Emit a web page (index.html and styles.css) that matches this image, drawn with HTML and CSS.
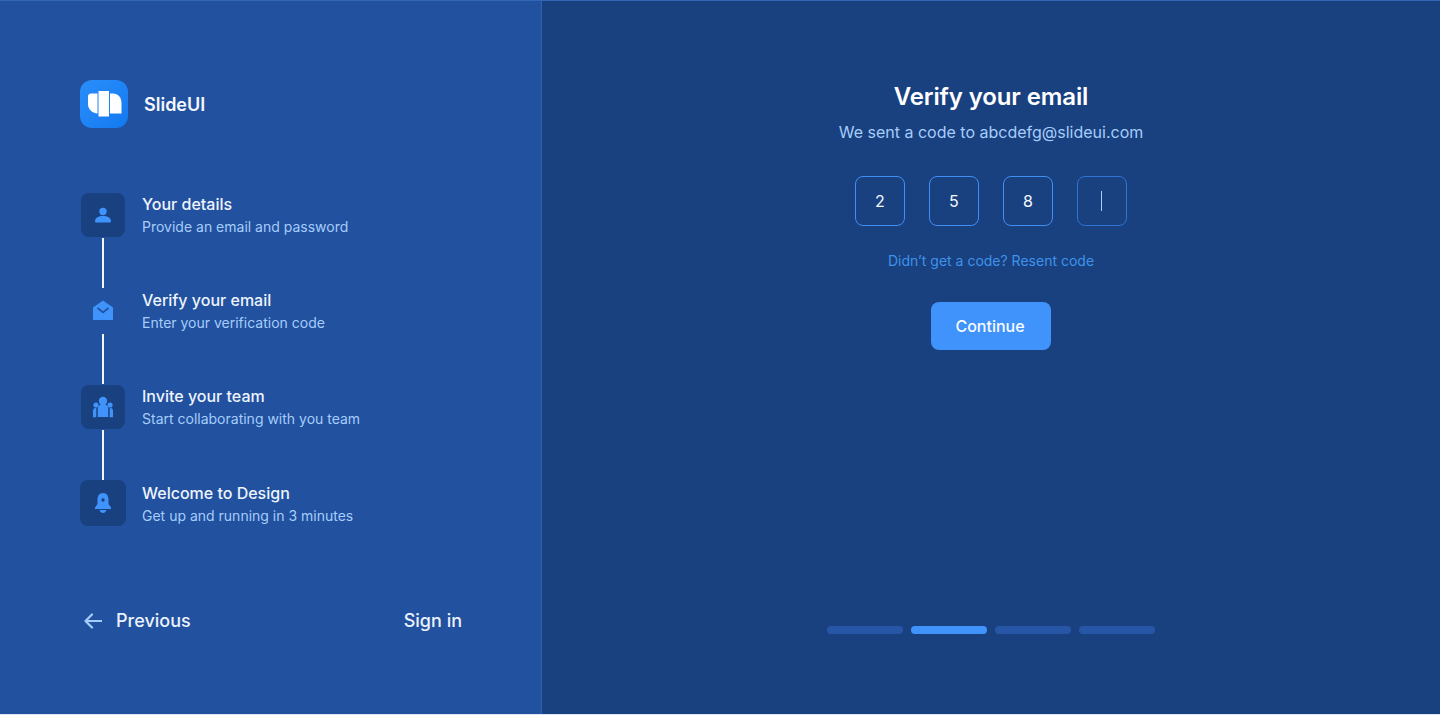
FILE: index.html
```html
<!DOCTYPE html>
<html lang="en">
<head>
<meta charset="utf-8">
<title>SlideUI – Verify your email</title>
<link rel="stylesheet" href="styles.css">
</head>
<body>
<main class="app">
  <aside class="side">
    <div class="brand">
      <div class="logo">
        <svg width="48" height="48" viewBox="0 0 48 48"><path d="M11 13.500h6.500v20c-5.500-.6-9.500-4.200-9.500-9.500v-7.500c0-1.800 1.200-3 3-3z" fill="#fff"/><path d="M18.500 11H29v25.500H18.500z" fill="#fff"/><path d="M30 13.500h3c5 0 8.500 4 8.500 9.500v10.500H30z" fill="#fff"/></svg>
      </div>
      <span class="brand-name">SlideUI</span>
    </div>
    <ol class="steps">
      <li class="step">
        <div class="rail">
          <div class="badge"><svg width="20" height="20" viewBox="0 0 20 20"><circle cx="10" cy="6.500" r="3.700" fill="#3f93fb"/><path d="M2 16.200c0-3.500 3.500-5.200 8-5.200s8 1.700 8 5.200c0 .9-.6 1.300-1.300 1.300H3.300c-.7 0-1.300-.4-1.300-1.300z" fill="#3f93fb"/></svg></div>
          <div class="line"></div>
        </div>
        <div class="copy"><h3>Your details</h3><p>Provide an email and password</p></div>
      </li>
      <li class="step">
        <div class="rail">
          <div class="badge plain"><svg width="22" height="22" viewBox="0 0 22 22"><path d="M1 7.500 11 .5l10 7V20H1z" fill="#3f93fb"/><path d="M5.500 8 11 12.500 16.500 8" fill="none" stroke="#21519f" stroke-width="1.700"/></svg></div>
          <div class="line"></div>
        </div>
        <div class="copy"><h3>Verify your email</h3><p>Enter your verification code</p></div>
      </li>
      <li class="step">
        <div class="rail">
          <div class="badge"><svg width="22" height="22" viewBox="0 0 22 22"><circle cx="11" cy="5" r="4.200" fill="#3f93fb"/><circle cx="4" cy="9" r="2.600" fill="#3f93fb"/><circle cx="18" cy="9" r="2.600" fill="#3f93fb"/><path d="M5.800 13c0-3 2.200-5 5.200-5s5.200 2 5.200 5v8H5.800z" fill="#3f93fb"/><path d="M1 15c0-1.700 1-3 2.500-3h.8v9.200H1zM17.700 12h.8c1.500 0 2.500 1.300 2.500 3v6.200h-3.300z" fill="#3f93fb"/></svg></div>
          <div class="line"></div>
        </div>
        <div class="copy"><h3>Invite your team</h3><p>Start collaborating with you team</p></div>
      </li>
      <li class="step last">
        <div class="rail">
          <div class="badge big"><svg width="20" height="22" viewBox="0 0 20 22"><path d="M10 1c3.500 0 5.500 2.800 5.500 6.500V12l2.500 3.500v1.500H2v-1.500L4.500 12V7.500C4.500 3.800 6.500 1 10 1z" fill="#3f93fb"/><circle cx="10" cy="8" r="1.700" fill="#19407f"/><path d="M6.500 18h7c-.5 1.800-2 3-3.500 3s-3-1.200-3.500-3z" fill="#3f93fb"/></svg></div>
        </div>
        <div class="copy"><h3>Welcome to Design</h3><p>Get up and running in 3 minutes</p></div>
      </li>
    </ol>
    <nav class="side-nav">
      <a class="nav-link" href="#"><svg width="22" height="18" viewBox="0 0 22 18"><path d="M21.500 9H5.500M12 2.500 5.500 9l6.500 6.500" fill="none" stroke="#a3cdfd" stroke-width="2.200" stroke-linecap="round" stroke-linejoin="round"/></svg>Previous</a>
      <a class="nav-link" href="#">Sign in</a>
    </nav>
  </aside>
  <section class="main">
    <div class="panel">
      <h1>Verify your email</h1>
      <p class="sent">We sent a code to abcdefg@slideui.com</p>
      <div class="code">
        <div class="digit">2</div>
        <div class="digit">5</div>
        <div class="digit">8</div>
        <div class="digit active"><span class="caret"></span></div>
      </div>
      <p class="resend">Didn’t get a code? Resent code</p>
      <button class="continue">Continue</button>
    </div>
    <div class="progress">
      <span class="bar"></span><span class="bar on"></span><span class="bar"></span><span class="bar"></span>
    </div>
  </section>
</main>
</body>
</html>
```

FILE: styles.css
```css
* { box-sizing: border-box; }
html, body { margin: 0; height: 100%; }
body { font-family: Inter, "Liberation Sans", sans-serif; background: #19407f; overflow: hidden; }
h1, h3, p, ol { margin: 0; padding: 0; }
ol { list-style: none; }
a { text-decoration: none; color: inherit; }

.app { display: flex; height: 715px; border-top: 1px solid #3267b8; border-bottom: 1px solid #dbe6f5; }

.side { width: 542px; flex: none; background: #21519f; border-right: 1px solid #2f62b1; padding: 79px 79px 0 80px; display: flex; flex-direction: column; }
.brand { display: flex; align-items: center; gap: 16px; height: 48px; }
.logo { width: 48px; height: 48px; border-radius: 12px; background: linear-gradient(135deg, #2a8efb, #1379f0); }
.logo svg { display: block; }
.brand-name { font-size: 18px; font-weight: 600; color: #f4f8fe; }

.steps { margin-top: 65px; }
.step { display: flex; gap: 16px; height: 96px; }
.step.last { height: 46px; margin-top: -1px; }
.step.last .copy { padding-top: 2px; }
.rail { width: 46px; display: flex; flex-direction: column; align-items: center; }
.badge { width: 44px; height: 44px; flex: none; border-radius: 8px; background: #19407f; display: flex; align-items: center; justify-content: center; }
.badge.plain { background: transparent; }
.badge.big { width: 46px; height: 46px; }
.line { width: 2px; height: 50px; margin-top: 1px; background: #f2f6fd; }
.copy h3 { font-size: 16px; line-height: 22px; font-weight: 500; color: #eef4fd; }
.copy p { font-size: 14px; line-height: 24px; color: #a6cdfb; }

.side-nav { margin-top: 83px; display: flex; justify-content: space-between; align-items: center; }
.nav-link { display: flex; align-items: center; gap: 14px; font-size: 18px; line-height: 24px; font-weight: 500; color: #eaf2fd; }
.nav-link svg { display: block; }

.main { flex: 1; display: flex; flex-direction: column; align-items: center; justify-content: space-between; padding: 80px 0 80px; }
.panel { display: flex; flex-direction: column; align-items: center; }
h1 { font-size: 24px; line-height: 32px; font-weight: 600; letter-spacing: -0.12px; color: #fff; }
.sent { margin-top: 7px; font-size: 16px; line-height: 24px; color: #a6cdfb; }
.code { margin-top: 32px; display: flex; gap: 24px; }
.digit { width: 50px; height: 50px; border: 1px solid #3f8ff5; border-radius: 8px; display: flex; align-items: center; justify-content: center; font-size: 16px; color: #f4f8fe; }
.digit.active { border-color: #2f74d4; }
.caret { width: 1px; height: 20px; background: #a6cdfb; }
.resend { margin-top: 25px; font-size: 14px; line-height: 20px; color: #3f93ea; }
.continue { margin-top: 31px; width: 120px; height: 48px; border: 0; padding: 0 2px 0 0; border-radius: 8px; background: #3f93fb; color: #f8fbff; font: 500 16px/24px Inter, "Liberation Sans", sans-serif; }

.progress { display: flex; gap: 8px; }
.bar { width: 76px; height: 8px; border-radius: 4px; background: #2756a6; }
.bar.on { background: #3f93fb; }
```
